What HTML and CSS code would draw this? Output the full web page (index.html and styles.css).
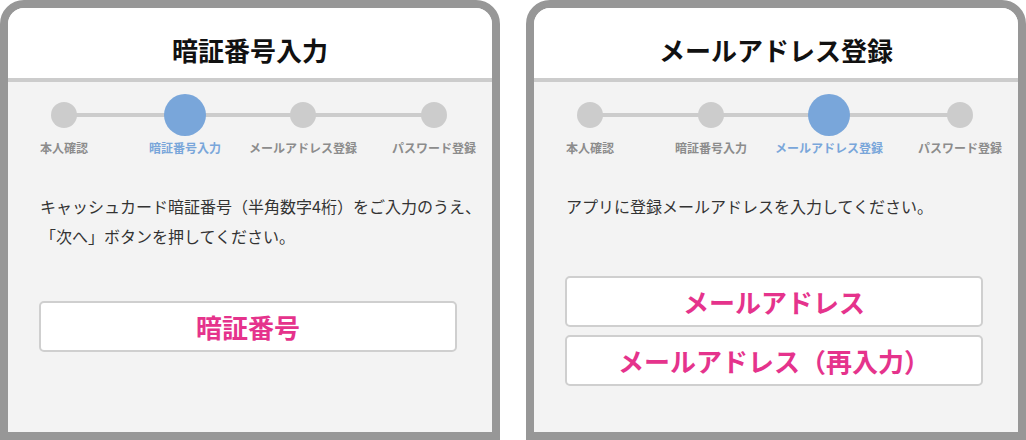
FILE: index.html
```html
<!DOCTYPE html>
<html lang="ja">
<head>
    <meta charset="UTF-8">
    <meta name="viewport" content="width=device-width, initial-scale=1.0">
    <title>登録フロー</title>
    <link rel="stylesheet" href="styles.css">
</head>
<body>
    <div class="screens">
        <section class="phone">
            <header class="phone-header">暗証番号入力</header>
            <ol class="steps">
                <li class="step"><span class="dot-box"><span class="dot"></span></span><span class="step-label">本人確認</span></li>
                <li class="step active"><span class="dot-box"><span class="dot"></span></span><span class="step-label">暗証番号入力</span></li>
                <li class="step"><span class="dot-box"><span class="dot"></span></span><span class="step-label">メールアドレス登録</span></li>
                <li class="step"><span class="dot-box"><span class="dot"></span></span><span class="step-label">パスワード登録</span></li>
            </ol>
            <p class="lead">キャッシュカード暗証番号（半角数字4桁）をご入力のうえ、<br>「次へ」ボタンを押してください。</p>
            <div class="fields fields-pin">
                <div class="field">暗証番号</div>
            </div>
        </section>

        <section class="phone">
            <header class="phone-header">メールアドレス登録</header>
            <ol class="steps">
                <li class="step"><span class="dot-box"><span class="dot"></span></span><span class="step-label">本人確認</span></li>
                <li class="step"><span class="dot-box"><span class="dot"></span></span><span class="step-label">暗証番号入力</span></li>
                <li class="step active"><span class="dot-box"><span class="dot"></span></span><span class="step-label">メールアドレス登録</span></li>
                <li class="step"><span class="dot-box"><span class="dot"></span></span><span class="step-label">パスワード登録</span></li>
            </ol>
            <p class="lead">アプリに登録メールアドレスを入力してください。</p>
            <div class="fields fields-mail">
                <div class="field">メールアドレス</div>
                <div class="field">メールアドレス（再入力）</div>
            </div>
        </section>
    </div>
</body>
</html>
```

FILE: styles.css
```css
* {
    box-sizing: border-box;
}
body {
    margin: 0;
    background-color: #ffffff;
    font-family: "Noto Sans CJK JP", "Noto Sans", sans-serif;
    color: #333333;
}
.screens {
    display: flex;
    gap: 26px;
}
.phone {
    width: 500px;
    height: 440px;
    border: 8px solid #979797;
    border-radius: 24px 24px 0 0;
    background-color: #f3f3f3;
    overflow: hidden;
}
.phone-header {
    background-color: #ffffff;
    border-bottom: 4px solid #cccccc;
    padding: 24px 0 10px;
    line-height: 36px;
    font-size: 26px;
    font-weight: 700;
    color: #111111;
    text-align: center;
}
.steps {
    list-style: none;
    margin: 0;
    padding: 12px 16px 0 0;
    display: grid;
    grid-template-columns: 112px 130px 106px 1fr;
    background: linear-gradient(#cccccc, #cccccc) no-repeat 56px 31px / 369px 4px;
}
.step {
    display: flex;
    flex-direction: column;
    align-items: center;
}
.step:last-child {
    justify-self: end;
}
.dot-box {
    height: 42px;
    display: flex;
    align-items: center;
}
.dot {
    width: 26px;
    height: 26px;
    border-radius: 50%;
    background-color: #cccccc;
}
.step-label {
    margin-top: 4px;
    line-height: 16px;
    font-size: 12px;
    font-weight: 700;
    color: #8c8c8c;
    white-space: nowrap;
}
.step.active .dot {
    width: 42px;
    height: 42px;
    background-color: #79a6da;
}
.step.active .step-label {
    color: #79a6da;
}
.lead {
    margin: 35px 0 0;
    padding: 0 4px 0 32px;
    font-size: 16px;
    line-height: 30px;
    white-space: nowrap;
}
.fields {
    display: flex;
    flex-direction: column;
    gap: 8px;
    width: 418px;
    margin-left: 31px;
}
.fields-pin {
    margin-top: 50px;
}
.fields-mail {
    margin-top: 55px;
}
.field {
    height: 51px;
    background-color: #ffffff;
    border: 2px solid #cfcfcf;
    border-radius: 5px;
    font-size: 26px;
    font-weight: 700;
    line-height: 47px;
    color: #e5338c;
    text-align: center;
}
```
